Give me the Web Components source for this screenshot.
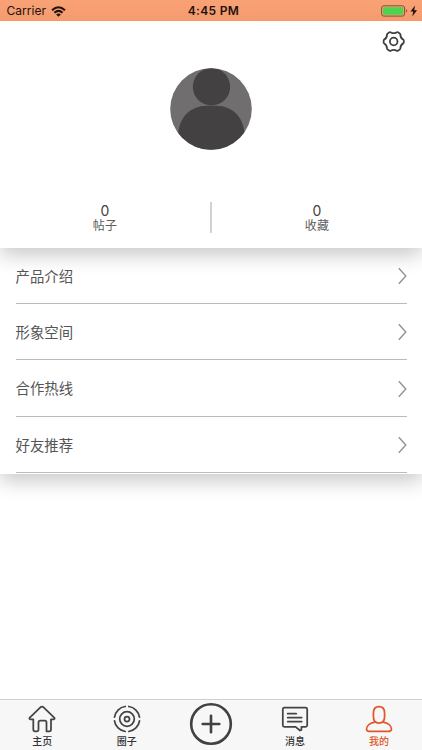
<!DOCTYPE html>
<html lang="zh-CN">
<head>
<meta charset="utf-8">
<title>我的</title>
<style>
html,body{margin:0;height:100%;background:#fff;overflow:hidden}
body{font-family:Inter,"Noto Sans CJK SC",sans-serif;color:#444}
</style>
</head>
<body>
<profile-page></profile-page>
<script>
function define(name, render) {
  customElements.define(name, class extends HTMLElement {
    constructor() {
      super();
      this.attachShadow({mode: 'open'});
    }
    connectedCallback() { this.shadowRoot.innerHTML = render(this); }
  });
}

define('status-bar', () => `
<style>
:host{display:grid;grid-template-columns:1fr auto 1fr;align-items:center;height:20.5px;background:linear-gradient(#f9a276,#f69a6e);color:#21130d;font-size:12px;line-height:20px;padding:1px 4px 0 6.5px;box-sizing:border-box}
.left{display:flex;align-items:center;gap:5px;letter-spacing:.03px}
.time{font-weight:600;letter-spacing:.3px;font-size:12px;padding-left:2.4px}
.right{display:flex;justify-content:flex-end;align-items:center}
svg{display:block}
</style>
<div class="left"><span>Carrier</span>
<svg width="15" height="11" viewBox="0 0 15 11" fill="none" stroke="#21130d" stroke-width="2"><path d="M1 4.2Q7.5-1.8 14 4.2M3.4 6.7Q7.5 3 11.6 6.7"/><path d="M5.1 8.4Q7.5 6.5 9.9 8.4L7.5 10.8Z" fill="#21130d" stroke="none"/></svg></div>
<span class="time">4:45 PM</span>
<div class="right"><svg width="37" height="13" viewBox="0 0 37 13"><rect x=".6" y=".8" width="23" height="10.3" rx="2.2" fill="none" stroke="#805033" stroke-width="1"/><rect x="2" y="2.2" width="20.2" height="7.5" rx="1" fill="#4bd44f"/><path d="M25.2 4.1Q27.4 5.9 25.2 7.8Z" fill="#805033"/><path d="M34.1.5 29.4 6.5h2.9l-1.1 4.9 4.9-6.2h-2.9Z" fill="#21130d"/></svg></div>`);

define('profile-head', () => `
<style>
:host{display:flex;flex-direction:column;height:227px;background:#fff;position:relative;z-index:2}
.bar{display:flex;justify-content:flex-end;height:47.5px;padding:9px 17px 0 0;box-sizing:border-box}
.avatar{align-self:center;display:block}
.stats{display:grid;grid-template-columns:1fr 2px 1fr;margin-top:52px}
i{background:#d2d2d2;height:31px}
</style>
<div class="bar"><svg width="23" height="23" viewBox="0 0 23 23" fill="none" stroke="#3f3f3f" stroke-width="1.8" stroke-linejoin="round"><path transform="translate(.2 0)" d="M7.3 2.3Q8.1 1.8 8.8 2.4Q11.5 4 14.2 2.4Q14.9 1.8 15.7 2.3L17.5 3.4Q18.3 3.9 18.2 4.9Q18.3 8 21 9.6Q21.7 10 21.6 11.5Q21.7 13 21 13.4Q18.3 15 18.2 18.1Q18.3 19.1 17.5 19.6L15.7 20.7Q14.9 21.2 14.2 20.6Q11.5 19 8.8 20.6Q8.1 21.2 7.3 20.7L5.5 19.6Q4.7 19.1 4.8 18.1Q4.7 15 2 13.4Q1.3 13 1.4 11.5Q1.3 10 2 9.6Q4.7 8 4.8 4.9Q4.7 3.9 5.5 3.4Z"/><circle cx="11.7" cy="11.5" r="3.8"/></svg></div>
<svg class="avatar" width="82" height="82" viewBox="0 0 82 82"><defs><clipPath id="c"><circle cx="41" cy="41" r="40.8"/></clipPath></defs><g clip-path="url(#c)"><rect width="82" height="82" fill="#706e6f"/><circle cx="41.5" cy="18.8" r="18.7" fill="#434142"/><path d="M8.2 82V68C8.2 50 20 37.8 37 37.8H46C63 37.8 74.5 50 74.5 68V82Z" fill="#434142"/></g></svg>
<div class="stats"><stat-item count="0">帖子</stat-item><i></i><stat-item count="0">收藏</stat-item></div>`);

define('stat-item', el => `
<style>
:host{display:flex;flex-direction:column;align-items:center;color:#444}
b{font-weight:400;font-size:14px;line-height:17px;height:16px}
span{font-size:12px;line-height:16px;letter-spacing:.2px;color:#5c5c5c}
</style><b>${el.getAttribute('count')}</b><span><slot></slot></span>`);

define('menu-list', () => `
<style>:host{display:block;background:#fff;position:relative}
.shade{position:absolute;left:0;right:0;height:34px;overflow:hidden;pointer-events:none}
.shade::before{content:"";position:absolute;left:0;right:0;top:-60px;height:60px;box-shadow:0 7px 20px rgba(0,0,0,.22)}
.top{top:0}.bottom{top:100%}
.rows{padding-bottom:1px;position:relative}
</style><div class="shade top"></div><div class="rows"><slot></slot></div><div class="shade bottom"></div>`);

define('menu-row', () => `
<style>
:host{display:flex;align-items:center;justify-content:space-between;height:56.4px;box-sizing:border-box;margin:0 15.5px;border-bottom:1px solid #bbb;font-size:14.4px;color:#555}
span{margin-top:-.4px}
svg{display:block;margin-top:1.4px}
</style><span><slot></slot></span><svg width="9" height="18" viewBox="0 0 9 18" fill="none" stroke="#929292" stroke-width="1.4"><path d="M.8 1.2 7.8 9 .8 16.8"/></svg>`);

define('tab-bar', () => `
<style>:host{display:grid;grid-template-columns:84.6px 84.4px 84.2px 83.6px 84.6px;height:51px;background:#f7f7f7;border-top:1px solid #cfcfcf;box-sizing:border-box}</style><slot></slot>`);

const icons = {
  home: '<path d="M5.3 14.3H2.1Q.8 13.7 1.8 12.6L12.4 2.3Q14 1 15.6 2.3L26.2 12.6Q27.2 13.7 25.9 14.3H23V24.5Q23 26.4 21.3 26.4H18.5V17.5Q18.5 15.7 16.9 15.7H12.2Q10.5 15.7 10.5 17.5V24.5Q10.5 26.4 8.8 26.4H7Q5.3 26.4 5.3 24.5Z"/>',
  rings: '<circle cx="14" cy="14" r="2.5"/><circle cx="14" cy="14" r="7.3"/><path d="M12.2 1.5A12.6 12.6 0 0 0 1.5 12.2M1.5 15.8A12.6 12.6 0 0 0 12.2 26.5M15.8 26.5A12.6 12.6 0 0 0 26.5 15.8M26.5 12.2A12.6 12.6 0 0 0 15.8 1.5"/>',
  message: '<path d="M3.4 2.7H24.6Q26.2 2.7 26.2 4.3V20.2Q26.2 21.8 24.6 21.8H20.4V25L19 25.5 14.6 21.8H3.4Q1.8 21.8 1.8 20.2V4.3Q1.8 2.7 3.4 2.7Z"/><path d="M6.7 8.7H15.2M6.7 12.6H20.7M6.7 16.5H20.7"/>',
  person: '<path d="M14 1.7C10 1.7 8.4 4.3 8.4 8.2V11.5C8.4 15.3 10.2 18 14 18S19.6 15.3 19.6 11.5V8.2C19.6 4.3 18 1.7 14 1.7Z"/><path d="M9.7 17.2C5.2 18 1.5 20.7 1.5 24.2Q1.5 26.4 5.5 26.4H22.5Q26.5 26.4 26.5 24.2C26.5 20.7 22.8 18 18.3 17.2"/>'
};
define('tab-item', el => {
  const icon = el.getAttribute('icon');
  if (icon === 'add') return `
<style>:host{display:flex;justify-content:center;padding-top:2px}svg{display:block}</style>
<svg width="44" height="44" viewBox="0 0 44 44" fill="none" stroke="#414141"><circle cx="22" cy="22" r="19.8" stroke-width="2.6"/><path d="M22 13.7V30.3M13.7 22H30.3" stroke-width="2.6" stroke-linecap="round"/></svg>`;
  const on = el.hasAttribute('active');
  return `
<style>
:host{display:flex;flex-direction:column;align-items:center;padding-top:5px;color:${on ? '#df582b' : '#333'};font-size:10px;font-weight:500}
svg{display:block}span{line-height:14px;margin-top:.5px}
</style>
<svg width="28" height="28" viewBox="0 0 28 28" fill="none" stroke="${on ? '#e1572b' : '#444'}" stroke-width="1.75" stroke-linecap="round" stroke-linejoin="round">${icons[icon]}</svg><span><slot></slot></span>`;
});

define('profile-page', () => `
<style>:host{display:flex;flex-direction:column;height:100vh}.fill{flex:1}</style>
<status-bar></status-bar>
<profile-head></profile-head>
<menu-list><menu-row>产品介绍</menu-row><menu-row>形象空间</menu-row><menu-row>合作热线</menu-row><menu-row>好友推荐</menu-row></menu-list>
<div class="fill"></div>
<tab-bar><tab-item icon="home">主页</tab-item><tab-item icon="rings">圈子</tab-item><tab-item icon="add"></tab-item><tab-item icon="message">消息</tab-item><tab-item icon="person" active>我的</tab-item></tab-bar>`);
</script>
</body>
</html>
